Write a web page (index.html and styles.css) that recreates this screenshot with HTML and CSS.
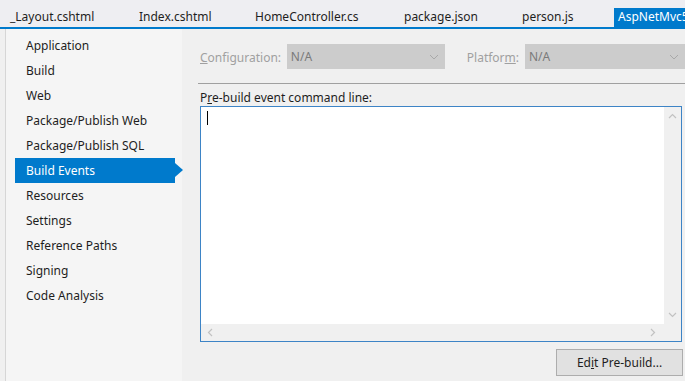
FILE: index.html
```html
<!DOCTYPE html>
<html>
<head>
<meta charset="utf-8">
<link rel="stylesheet" href="styles.css">
</head>
<body>
<div class="tabs">
  <div class="tab t1">_Layout.cshtml</div>
  <div class="tab t2">Index.cshtml</div>
  <div class="tab t3">HomeController.cs</div>
  <div class="tab t4">package.json</div>
  <div class="tab t5">person.js</div>
  <div class="tab active">AspNetMvc5</div>
</div>
<div class="body">
  <nav class="side">
    <div class="item">Application</div>
    <div class="item">Build</div>
    <div class="item">Web</div>
    <div class="item">Package/Publish Web</div>
    <div class="item">Package/Publish SQL</div>
    <div class="item sel">Build Events</div>
    <div class="item">Resources</div>
    <div class="item">Settings</div>
    <div class="item">Reference Paths</div>
    <div class="item">Signing</div>
    <div class="item">Code Analysis</div>
  </nav>
  <main class="main">
    <div class="config">
      <span class="lbl lbl-conf"><u>C</u>onfiguration:</span>
      <div class="dd dd-conf"><span>N/A</span>
        <svg width="10" height="6" viewBox="0 0 10 6"><path d="M1 1 L5 5 L9 1" fill="none" stroke="#a8a8a8" stroke-width="1"/></svg>
      </div>
      <span class="lbl lbl-plat">Platfor<u>m</u>:</span>
      <div class="dd dd-plat"><span>N/A</span>
        <svg width="10" height="6" viewBox="0 0 10 6"><path d="M1 1 L5 5 L9 1" fill="none" stroke="#a8a8a8" stroke-width="1"/></svg>
      </div>
    </div>
    <div class="rule"></div>
    <div class="cmd-label">P<u>r</u>e-build event command line:</div>
    <div class="box">
      <div class="box-top">
        <div class="text"><span class="caret"></span></div>
        <div class="vscroll">
          <svg width="9" height="6" viewBox="0 0 9 6"><path d="M1 5 L4.5 1.5 L8 5" fill="none" stroke="#c2c2c2" stroke-width="1.2"/></svg>
          <svg width="9" height="6" viewBox="0 0 9 6"><path d="M1 1 L4.5 4.5 L8 1" fill="none" stroke="#c2c2c2" stroke-width="1.2"/></svg>
        </div>
      </div>
      <div class="hscroll">
        <svg width="6" height="9" viewBox="0 0 6 9"><path d="M5 1 L1.5 4.5 L5 8" fill="none" stroke="#c2c2c2" stroke-width="1.2"/></svg>
        <svg width="6" height="9" viewBox="0 0 6 9"><path d="M1 1 L4.5 4.5 L1 8" fill="none" stroke="#c2c2c2" stroke-width="1.2"/></svg>
      </div>
    </div>
    <div class="actions">
      <button class="btn">Ed<u>i</u>t Pre-build...</button>
    </div>
  </main>
</div>
</body>
</html>
```
FILE: styles.css
```css
* { box-sizing: border-box; }
html, body { margin: 0; padding: 0; }
body {
  width: 685px;
  height: 381px;
  overflow: hidden;
  background: #f0f0f0;
  font-family: "Noto Sans", "Open Sans", sans-serif;
  font-size: 12px;
  color: #1e1e1e;
}
.tabs {
  height: 29px;
  background: #eeeef2;
  border-bottom: 2px solid #007acc;
  display: flex;
  align-items: flex-end;
  white-space: nowrap;
  overflow: hidden;
}
.tab {
  height: 19px;
  line-height: 18px;
  flex: none;
}
.t1 { width: 139px; padding-left: 10px; }
.t2 { width: 116px; }
.t3 { width: 149px; }
.t4 { width: 118px; }
.t5 { width: 92px; }
.active {
  background: #007acc;
  color: #fff;
  padding-left: 4px;
  width: 71px;
  overflow: hidden;
}
.body {
  display: flex;
  height: 352px;
}
.side {
  width: 177px;
  flex: none;
  margin-left: 5px;
  border-left: 1px solid #d6d6d6;
  background: #f5f5f5;
  padding-top: 4px;
  padding-left: 9px;
}
.item {
  height: 25px;
  line-height: 25px;
  padding-left: 11px;
  width: 160px;
  position: relative;
}
.item.sel {
  background: #007acc;
  color: #fff;
}
.item.sel::after {
  content: "";
  position: absolute;
  right: -8px;
  top: 5px;
  border-left: 8px solid #007acc;
  border-top: 7.5px solid transparent;
  border-bottom: 7.5px solid transparent;
}
.main {
  flex: 1;
  padding-left: 18px;
  padding-top: 15px;
  min-width: 0;
}
.config {
  display: flex;
  align-items: center;
  height: 25px;
  padding-top: 1px;
  white-space: nowrap;
}
.lbl { color: #a0a0a0; }
.lbl-conf { width: 88px; }
.lbl-plat { width: 59px; }
.dd {
  height: 25px;
  margin-top: -1px;
  background: #cccccc;
  color: #7a7a7a;
  display: flex;
  align-items: center;
  justify-content: space-between;
  padding: 0 6px 0 4px;
  flex: none;
}
.dd-conf { width: 158px; margin-right: 22px; }
.dd-plat { width: 160px; }
.rule {
  margin-top: 14px;
  margin-left: -2px;
  height: 1px;
  background: #a0a0a0;
}
.cmd-label {
  margin-top: 6px;
  height: 15px;
  line-height: 15px;
}
.box {
  margin-top: 1px;
  width: 482px;
  height: 236px;
  border: 1px solid #3d84c6;
  background: #f0f0f0;
  display: flex;
  flex-direction: column;
}
.box-top {
  flex: 1;
  display: flex;
}
.text {
  flex: 1;
  background: #fff;
  padding: 4px 0 0 6px;
}
.caret {
  display: block;
  width: 1px;
  height: 14px;
  background: #000;
}
.vscroll {
  width: 17px;
  background: #f0f0f0;
  display: flex;
  flex-direction: column;
  justify-content: space-between;
  align-items: center;
  padding: 6px 0 6px;
}
.hscroll {
  height: 17px;
  margin-right: 17px;
  background: #f0f0f0;
  display: flex;
  justify-content: space-between;
  align-items: center;
  padding: 0 8px 0 6px;
}
.actions {
  display: flex;
  justify-content: flex-end;
  width: 483px;
  margin-top: 7px;
}
.btn {
  width: 127px;
  height: 27px;
  background: #e1e1e1;
  border: 1px solid #adadad;
  font-family: inherit;
  font-size: 12px;
  color: #1e1e1e;
  padding: 0;
}
```
